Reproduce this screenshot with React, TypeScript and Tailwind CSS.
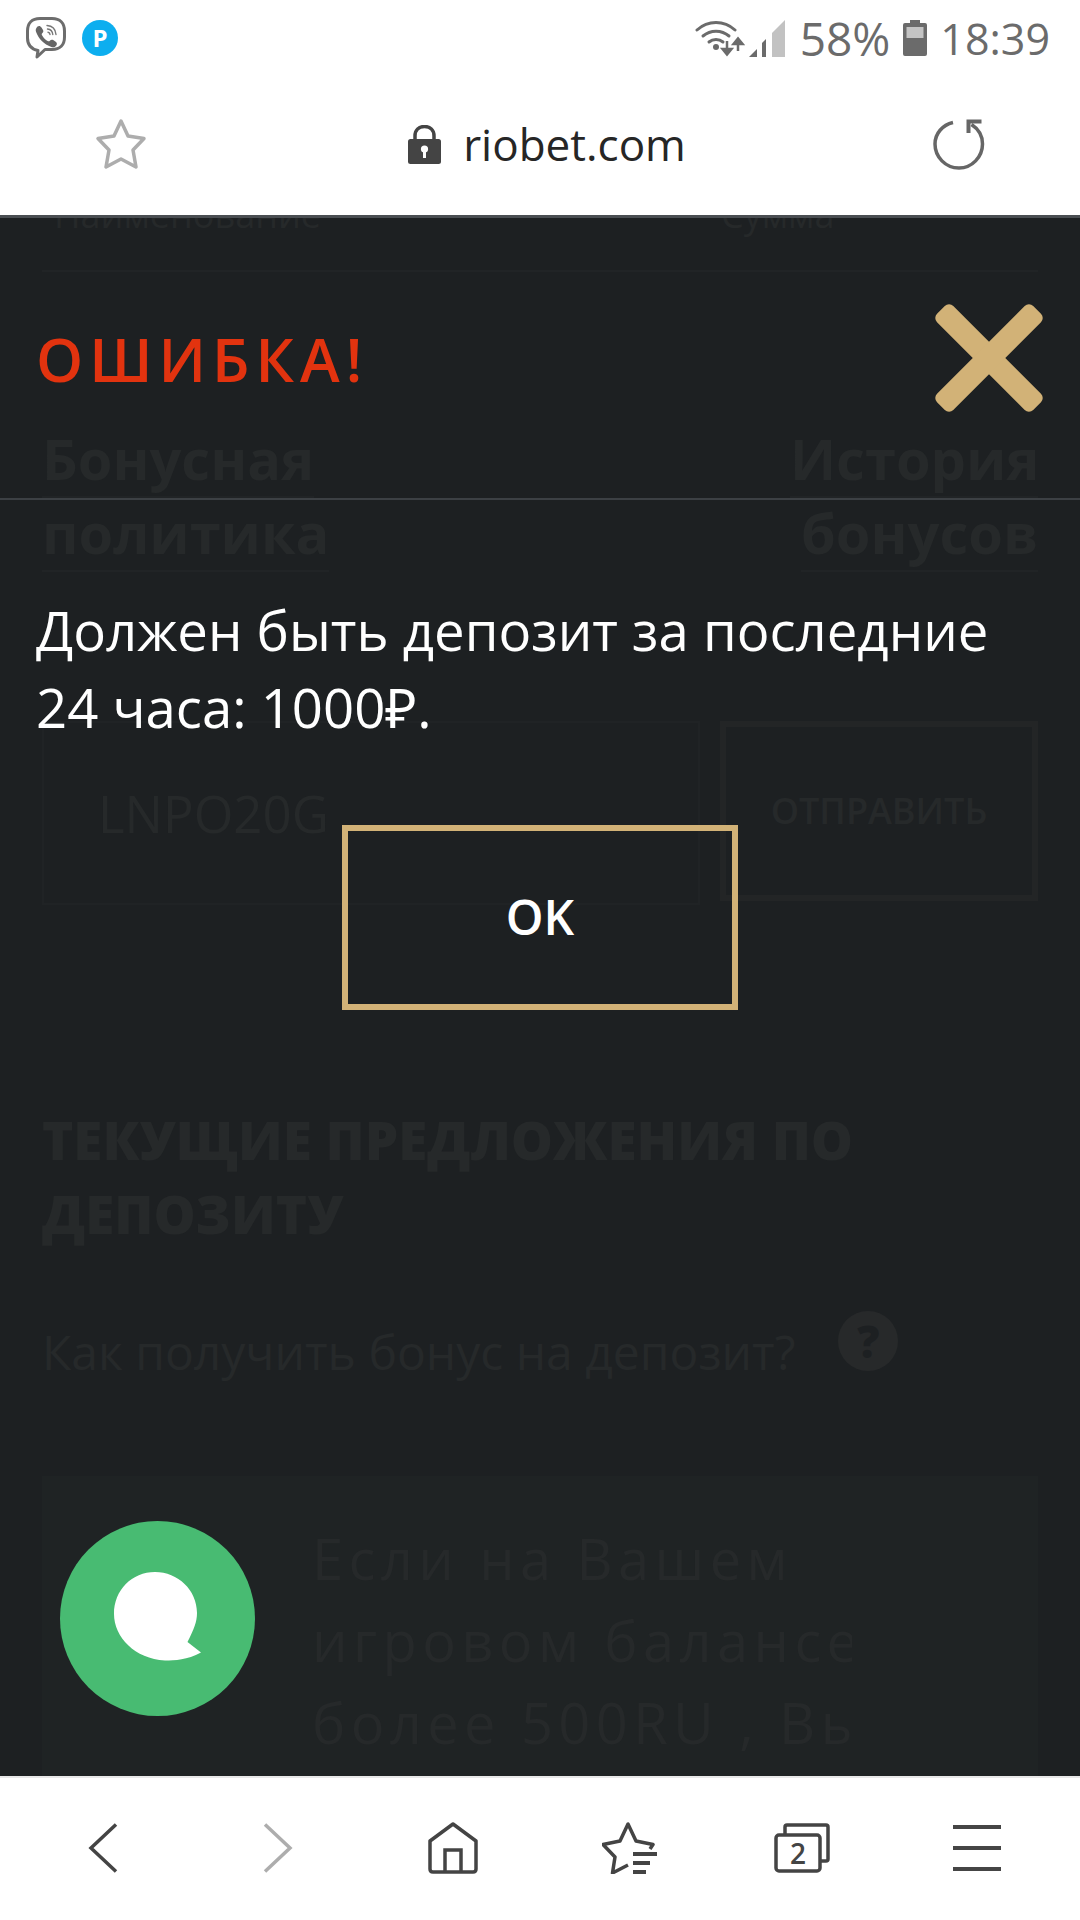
import React from 'react';

const sans = "font-['Open_Sans',sans-serif]";

const ViberIcon = () => (
  <svg width="42" height="44" viewBox="0 0 42 44" fill="none">
    <path d="M13 34.5C6 33 2.5 29 2.5 22V15C2.5 7 7 2.5 15 2.5H27C35 2.5 39.5 7 39.5 15V21C39.5 29 35 33.5 27 33.5H20L12 41Z" stroke="#6d6d6d" strokeWidth="3" strokeLinejoin="round" fill="#fff" />
    <path d="M12.5 10.5C14 9.5 15.5 10 16.5 11.5L18 14C18.7 15.2 18.3 16.3 17.2 17.2C16.5 17.8 16.6 18.6 17.2 19.6C18.6 22 20.4 23.8 22.6 25C23.6 25.6 24.3 25.4 24.9 24.7C25.8 23.6 27 23.3 28.2 24.1L30.7 25.8C32 26.8 32.3 28.2 31.3 29.4C30 31 28.4 31.8 26.4 31C18.8 28.2 13.6 23 11 15.8C10.3 13.6 11 12 12.5 10.5Z" fill="#666" />
    <path d="M22 9.5C27 9.8 30.5 13 31 18.5M22.5 13C25.5 13.3 27.5 15.2 27.8 18.5M23 16.2C24.3 16.4 25 17.2 25 18.6" stroke="#777" strokeWidth="1.4" strokeLinecap="round" />
  </svg>
);

const PIcon = () => (
  <div className={`w-[36px] h-[36px] rounded-full bg-[#0daeef] flex items-center justify-center text-white text-[24px] font-bold leading-none ${sans}`}>P</div>
);

const WifiIcon = () => (
  <svg width="50" height="38" viewBox="0 0 50 38" fill="none">
    <path d="M2 11C13 1 29 1 40 11" stroke="#6b6b6b" strokeWidth="3" strokeLinecap="round" />
    <path d="M8 17C15.5 10.5 26.5 10.5 34 17" stroke="#6b6b6b" strokeWidth="3" strokeLinecap="round" />
    <path d="M14 23C18 19.5 24 19.5 28 23" stroke="#6b6b6b" strokeWidth="3" strokeLinecap="round" />
    <circle cx="21" cy="28" r="3" fill="#6b6b6b" />
    <path d="M32 22V34M27.5 30L32 35.5L36.5 30Z" stroke="#6b6b6b" strokeWidth="2.5" fill="#6b6b6b" />
    <path d="M43 32V20M38.5 25L43 19.5L47.5 25Z" stroke="#6b6b6b" strokeWidth="2.5" fill="#6b6b6b" />
  </svg>
);

const SignalIcon = () => (
  <svg width="36" height="37" viewBox="0 0 36 37">
    <path d="M0 37L8 29V37Z" fill="#6b6b6b" />
    <path d="M13 23L17 19V37H13Z" fill="#6b6b6b" />
    <path d="M23 13L36 0V37H23Z" fill="#c2c2c2" />
  </svg>
);

const BatteryIcon = () => (
  <svg width="24" height="36" viewBox="0 0 24 36">
    <path d="M7 0H17V3H22Q24 3 24 5V34Q24 36 22 36H2Q0 36 0 34V5Q0 3 2 3H7Z" fill="#6b6b6b" />
    <rect x="3.5" y="7" width="17" height="11" fill="#c4c4c4" />
  </svg>
);

const StarIcon = () => (
  <svg width="52" height="52" viewBox="0 0 52 52" fill="none">
    <path d="M26 3L33 18L49 20.5L38 32L41 49L26 41L11 49L14 32L3 20.5L19 18Z" stroke="#adadad" strokeWidth="3.5" strokeLinejoin="round" />
  </svg>
);

const LockIcon = () => (
  <svg width="33" height="39" viewBox="0 0 33 39">
    <path d="M7 15V11C7 5 11 1.5 16.5 1.5S26 5 26 11V15" stroke="#444" strokeWidth="3.5" fill="none" />
    <rect x="0" y="14" width="33" height="25" rx="2.5" fill="#444" />
    <circle cx="16.5" cy="24" r="3.6" fill="#fff" />
    <rect x="15" y="25" width="3" height="8" fill="#fff" />
  </svg>
);

const RefreshIcon = () => (
  <svg width="52" height="52" viewBox="0 0 52 52" fill="none">
    <path d="M20 4.5C9.5 7 2 15.5 2 26C2 39 12.5 50 26 50C39 50 49.5 39 49.5 26C49.5 18 45.5 11 38.5 6.5" stroke="#666" strokeWidth="3.5" />
    <path d="M33.5 15V1.5H48.5V5.5H37.5V15Z" fill="#666" />
  </svg>
);

const ChatBubble = () => (
  <svg width="90" height="92" viewBox="0 0 90 92">
    <path d="M42 1C65 1 84 19 84 42C84 51 81 58 74.500 71L88 81.500C74 89 62 89.500 52 89.500C22 88 1 66 1 43C1 19 19 1 42 1Z" fill="#fff" />
  </svg>
);

const BackIcon = () => (
  <svg width="30" height="50" viewBox="0 0 30 50" fill="none">
    <path d="M28 1.500L3 25L28 48.500" stroke="#444" strokeWidth="3.500" />
  </svg>
);

const ForwardIcon = () => (
  <svg width="30" height="50" viewBox="0 0 30 50" fill="none">
    <path d="M2 1.500L27 25L2 48.500" stroke="#adadad" strokeWidth="3.500" />
  </svg>
);

const HomeIcon = () => (
  <svg width="50" height="52" viewBox="0 0 50 52" fill="none">
    <path d="M25 2L48 19V47Q48 50 45 50H5Q2 50 2 47V19Z" stroke="#444" strokeWidth="3.500" strokeLinejoin="round" />
    <path d="M17 50V28H33V50" stroke="#444" strokeWidth="3.500" />
  </svg>
);

const BookmarksIcon = () => (
  <svg className="ml-[5px]" width="56" height="52" viewBox="0 0 56 52" fill="none">
    <path d="M48 27L51 22.500L34 19L26 2L18 19L1 22.500L13 35L10.500 51L26 43" stroke="#444" strokeWidth="3.500" strokeLinejoin="round" />
    <rect x="31" y="30" width="24" height="4" fill="#444" />
    <rect x="31" y="39" width="17" height="4" fill="#444" />
    <rect x="31" y="48" width="13" height="4" fill="#444" />
  </svg>
);

const TabsIcon = () => (
  <svg width="56" height="50" viewBox="0 0 56 50" fill="none">
    <path d="M11 11V4Q11 2 13 2H52Q54 2 54 4V36Q54 38 52 38H46" stroke="#444" strokeWidth="3.500" />
    <rect x="2" y="12" width="44" height="36" rx="3" stroke="#444" strokeWidth="3.500" />
    <text x="24" y="41" textAnchor="middle" fontSize="28" fontWeight="600" fill="#444" fontFamily="Open Sans">2</text>
  </svg>
);

const MenuIcon = () => (
  <div className="w-[48px] flex flex-col gap-[17px]">
    <div className="h-[4px] bg-[#454545]" />
    <div className="h-[4px] bg-[#454545]" />
    <div className="h-[4px] bg-[#454545]" />
  </div>
);

// dimmed page that shows through the modal
const GhostPage = () => (
  <div className={`text-[#26292a] ${sans}`}>
    <div className="h-[54px] mx-[42px] border-b-2 border-[#212426] overflow-hidden">
      <div className="flex text-[36px] leading-[40px] pl-[12px] -mt-[23px]">
        <span className="w-[667px]">Наименование</span>
        <span>Сумма</span>
      </div>
    </div>
    <div className="mx-[42px] mt-[152px] flex justify-between text-[56px] leading-[69px] font-bold">
      <div className="w-[287px]">
        <div className="border-b-2 border-[#212426] w-[272px] pb-[3px]">Бонусная</div>
        <div className="border-b-2 border-[#212426] pb-[3px]">политика</div>
      </div>
      <div className="w-[248px] text-right">
        <div className="border-b-2 border-[#212426] pb-[3px] pr-[3px] whitespace-nowrap">История</div>
        <div className="border-b-2 border-[#212426] pb-[3px] pr-[3px] ml-[11px]">бонусов</div>
      </div>
    </div>
    <div className="mx-[42px] mt-[149px] flex gap-[20px]">
      <div className="w-[658px] h-[184px] border-2 border-[#202325] flex items-center pl-[54px] text-[51px]">LNPO20G</div>
      <div className="w-[318px] h-[180px] border-[6px] border-[#232526] flex items-center justify-center text-[36px] font-semibold">ОТПРАВИТЬ</div>
    </div>
    <div className="mx-[42px] mt-[198px] text-[53px] leading-[74px] font-extrabold">
      ТЕКУЩИЕ ПРЕДЛОЖЕНИЯ ПО<br />ДЕПОЗИТУ
    </div>
    <div className="mx-[42px] mt-[60px] flex items-start">
      <div className="text-[48px] leading-[60px] mt-[11px]">Как получить бонус на депозит?</div>
      <div className="ml-[43px] w-[60px] h-[60px] rounded-full bg-[#27292a] flex items-center justify-center text-[44px] font-extrabold text-[#1d2022]">?</div>
    </div>
    <div className="mx-[42px] mt-[94px] h-[400px] bg-[#1f2324] pl-[270px] pt-[41px] text-[56px] leading-[82px] tracking-[5.4px] overflow-hidden">
      <div className="w-[540px] overflow-hidden whitespace-nowrap">Если на Вашем<br />игровом балансе<br />более 500RU , Вы</div>
    </div>
  </div>
);

const App = () => {
  return (
    <div className={`w-[1080px] h-[1920px] flex flex-col bg-white overflow-hidden ${sans}`}>
      {/* status bar */}
      <div className="h-[76px] flex items-center justify-between pl-[25px] pr-[30px] shrink-0">
        <div className="flex items-center gap-[15px]">
          <ViberIcon />
          <PIcon />
        </div>
        <div className="flex items-center leading-none text-[#6b6b6b]">
          <WifiIcon />
          <div className="ml-[4px]"><SignalIcon /></div>
          <span className="ml-[15px] text-[46px]">58%</span>
          <div className="ml-[13px]"><BatteryIcon /></div>
          <span className="ml-[13px] text-[43px]">18:39</span>
        </div>
      </div>
      {/* url bar */}
      <div className="h-[142px] flex items-center justify-between px-[95px] pb-[3px] shrink-0 border-b-[3px] border-[#4a4e52]">
        <StarIcon />
        <div className="ml-[14px] flex items-center gap-[22px] text-[44px] text-[#262626]">
          <LockIcon />
          <span>riobet.com</span>
        </div>
        <RefreshIcon />
      </div>

      <div className="relative flex-1 overflow-hidden bg-[#1d2022]">
        <GhostPage />
        {/* error modal */}
        <div className="absolute inset-0 flex flex-col">
          <div className="h-[282px] border-b-2 border-[#3c4044] flex items-center justify-between pl-[36px] pr-[36px]">
            <span className="mt-[2px] text-[60px] font-semibold leading-none tracking-[6px] text-[#e2330f]">ОШИБКА!</span>
            <svg width="110" height="110" viewBox="0 0 110 110">
              <rect x="-13" y="43.5" width="136" height="23" rx="6" fill="#d2b277" transform="rotate(45 55 55)" />
              <rect x="-13" y="43.5" width="136" height="23" rx="6" fill="#d2b277" transform="rotate(-45 55 55)" />
            </svg>
          </div>
          <div className="mt-[92px] px-[36px] text-[54.5px] leading-[77px] text-white">
            Должен быть депозит за последние<br />24 часа: 1000₽.
          </div>
          <div className="mt-[79px] mx-auto w-[396px] h-[185px] border-[6px] border-[#d2b277] flex items-center justify-center text-[48px] font-semibold text-white pb-[2px]">OK</div>
        </div>
        {/* chat button */}
        <div className="absolute left-[60px] top-[1303px] w-[195px] h-[195px] rounded-full bg-[#48bb72] flex items-center justify-center">
          <div className="translate-y-[-2px]"><ChatBubble /></div>
        </div>
      </div>

      {/* bottom toolbar */}
      <div className="h-[144px] shrink-0 border-t-2 border-[#e8e8e8] grid grid-cols-6 items-center justify-items-center px-[16px] pb-[2px]">
        <BackIcon />
        <ForwardIcon />
        <HomeIcon />
        <BookmarksIcon />
        <TabsIcon />
        <MenuIcon />
      </div>
    </div>
  );
};

export default App;
